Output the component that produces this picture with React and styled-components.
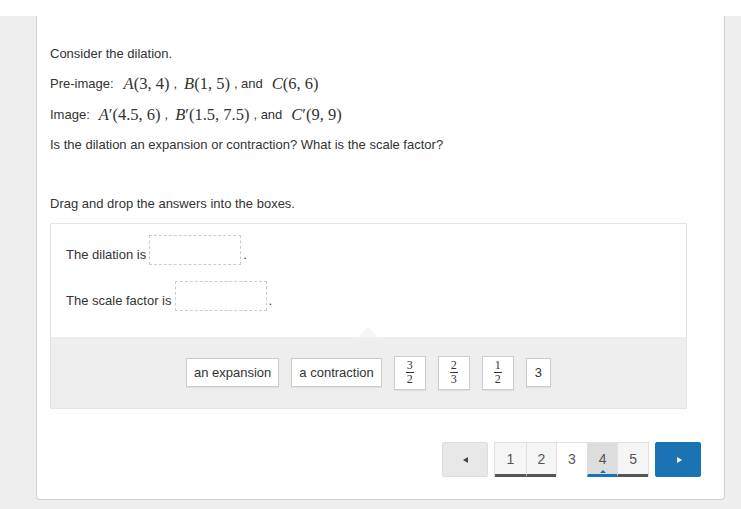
import React from "react";
import styled, { createGlobalStyle } from "styled-components";

const GlobalStyle = createGlobalStyle`
  body {
    margin: 0;
    background: #eeeeee;
    font-family: "Liberation Sans", Arial, sans-serif;
    color: #333333;
  }
`;

const TopStrip = styled.div`
  height: 16px;
  background: #ffffff;
`;

const Page = styled.div`
  padding: 0 16px 10px 36px;
`;

const Card = styled.div`
  background: #ffffff;
  border: 1px solid #cfcfcf;
  border-top: none;
  border-radius: 0 0 4px 4px;
  padding: 28px 23px 22px 13px;
  height: 433px;
`;

const Line = styled.p`
  margin: 0 0 ${(p) => p.$gap || 10}px;
  font-size: 13px;
  line-height: 20px;
  display: flex;
  align-items: center;
  white-space: pre;
`;

const MathText = styled.span`
  font-family: "Liberation Serif", "Times New Roman", serif;
  font-size: 16.5px;
  margin: 0 4px 0 ${(p) => p.$ml || 7}px;
  i {
    font-style: italic;
  }
`;

const Instructions = styled(Line)`
  margin: 39px 0 9px;
`;

const DragBox = styled.div`
  width: 635px;
  border: 1px solid #e4e4e4;
`;

const Prompts = styled.div`
  display: flex;
  flex-direction: column;
  gap: 16px;
  padding: 11px 15px 26px;
  position: relative;
`;

const Prompt = styled.div`
  display: flex;
  align-items: flex-end;
  font-size: 13px;
  line-height: 15px;
  span:first-child {
    padding-bottom: 3px;
  }
`;

const DropZone = styled.span`
  width: 90px;
  height: 28px;
  border: 1px dashed #cccccc;
  margin: 0 2px 0 3px;
`;

const Period = styled.span`
  padding-bottom: 3px;
`;

const Notch = styled.span`
  position: absolute;
  left: 307px;
  bottom: 0;
  width: 0;
  height: 0;
  border-left: 10px solid transparent;
  border-right: 10px solid transparent;
  border-bottom: 10px solid #f6f6f6;
`;

const Tray = styled.div`
  background: #eeeeee;
  height: 71px;
  display: flex;
  align-items: center;
  justify-content: center;
  gap: 12px;
`;

const Tile = styled.div`
  background: #ffffff;
  border: 1px solid #cccccc;
  box-shadow: 0 1px 1px rgba(0, 0, 0, 0.06);
  height: ${(p) => (p.$tall ? "32px" : "27px")};
  width: ${(p) => (p.$tall ? "30px" : "auto")};
  padding: 0 ${(p) => (p.$tall ? "0" : p.$narrow ? "8px" : "7px")};
  display: flex;
  align-items: center;
  justify-content: center;
  font-size: 13px;
  color: #333333;
`;

const Frac = styled.span`
  display: flex;
  flex-direction: column;
  align-items: stretch;
  font-family: "Liberation Serif", "Times New Roman", serif;
  font-size: 12px;
  line-height: 11px;
  text-align: center;
`;

const Num = styled.span`
  display: block;
  padding: 0 1px 1px;
`;

const Den = styled.span`
  display: block;
  border-top: 1px solid #333333;
  padding: 1px 1px 0;
`;

const Pager = styled.div`
  margin-top: 33px;
  display: flex;
  justify-content: flex-end;
  gap: 6px;
`;

const ArrowButton = styled.div`
  width: 46px;
  height: 35px;
  box-sizing: border-box;
  border-radius: 2px;
  display: flex;
  align-items: center;
  justify-content: center;
  background: ${(p) => (p.$primary ? "#1b73b3" : "#e8e8e8")};
  border: 1px solid ${(p) => (p.$primary ? "#1b73b3" : "#dddddd")};
`;

const Tri = styled.span`
  width: 0;
  height: 0;
  border-top: 3px solid transparent;
  border-bottom: 3px solid transparent;
  ${(p) =>
    p.$right
      ? "border-left: 5px solid #ffffff; margin-left: 2px;"
      : "border-right: 5px solid #444444;"}
`;

const Pages = styled.div`
  display: flex;
  border: 1px solid #e0e0e0;
  border-bottom: none;
`;

const PageNum = styled.div`
  width: 30.6px;
  height: 34px;
  box-sizing: border-box;
  border-left: ${(p) => (p.$first ? "none" : "1px solid #e0e0e0")};
  border-bottom: 3px solid
    ${(p) => (p.$current ? "#1b73b3" : p.$done ? "#555555" : "transparent")};
  background: ${(p) =>
    p.$current ? "#dddddd" : p.$active ? "#ffffff" : "#f5f5f5"};
  font-size: 14px;
  color: #555555;
  display: flex;
  align-items: center;
  justify-content: center;
  position: relative;
`;

const Caret = styled.span`
  position: absolute;
  bottom: 1px;
  left: 50%;
  margin-left: -3px;
  border-left: 3px solid transparent;
  border-right: 3px solid transparent;
  border-bottom: 3px solid #1b73b3;
`;

const pages = [
  { n: 1, done: true },
  { n: 2, done: true },
  { n: 3, active: true },
  { n: 4, current: true },
  { n: 5, done: true },
];

const tiles = [
  { label: "an expansion" },
  { label: "a contraction" },
  { num: "3", den: "2" },
  { num: "2", den: "3" },
  { num: "1", den: "2" },
  { label: "3", narrow: true },
];

export default function App() {
  return (
    <>
      <GlobalStyle />
      <TopStrip />
      <Page>
        <Card>
          <Line>Consider the dilation.</Line>
          <Line $gap={11}>
            Pre-image:
            <MathText $ml={10}>
              <i>A</i>(3, 4)
            </MathText>
            ,
            <MathText>
              <i>B</i>(1, 5)
            </MathText>
            , and
            <MathText $ml={9}>
              <i>C</i>(6, 6)
            </MathText>
          </Line>
          <Line>
            Image:
            <MathText $ml={9}>
              <i>A</i>′(4.5, 6)
            </MathText>
            ,
            <MathText>
              <i>B</i>′(1.5, 7.5)
            </MathText>
            , and
            <MathText $ml={9}>
              <i>C</i>′(9, 9)
            </MathText>
          </Line>
          <Line>Is the dilation an expansion or contraction? What is the scale factor?</Line>
          <Instructions>Drag and drop the answers into the boxes.</Instructions>
          <DragBox>
            <Prompts>
              <Prompt>
                <span>The dilation is</span>
                <DropZone />
                <Period>.</Period>
              </Prompt>
              <Prompt>
                <span>The scale factor is</span>
                <DropZone />
                <Period>.</Period>
              </Prompt>
              <Notch />
            </Prompts>
            <Tray>
              {tiles.map((t, i) =>
                t.num ? (
                  <Tile key={i} $tall>
                    <Frac>
                      <Num>{t.num}</Num>
                      <Den>{t.den}</Den>
                    </Frac>
                  </Tile>
                ) : (
                  <Tile key={i} $narrow={t.narrow}>
                    {t.label}
                  </Tile>
                )
              )}
            </Tray>
          </DragBox>
          <Pager>
            <ArrowButton>
              <Tri />
            </ArrowButton>
            <Pages>
              {pages.map((p, i) => (
                <PageNum
                  key={p.n}
                  $first={i === 0}
                  $done={p.done}
                  $active={p.active}
                  $current={p.current}
                >
                  {p.n}
                  {p.current && <Caret />}
                </PageNum>
              ))}
            </Pages>
            <ArrowButton $primary>
              <Tri $right />
            </ArrowButton>
          </Pager>
        </Card>
      </Page>
    </>
  );
}
